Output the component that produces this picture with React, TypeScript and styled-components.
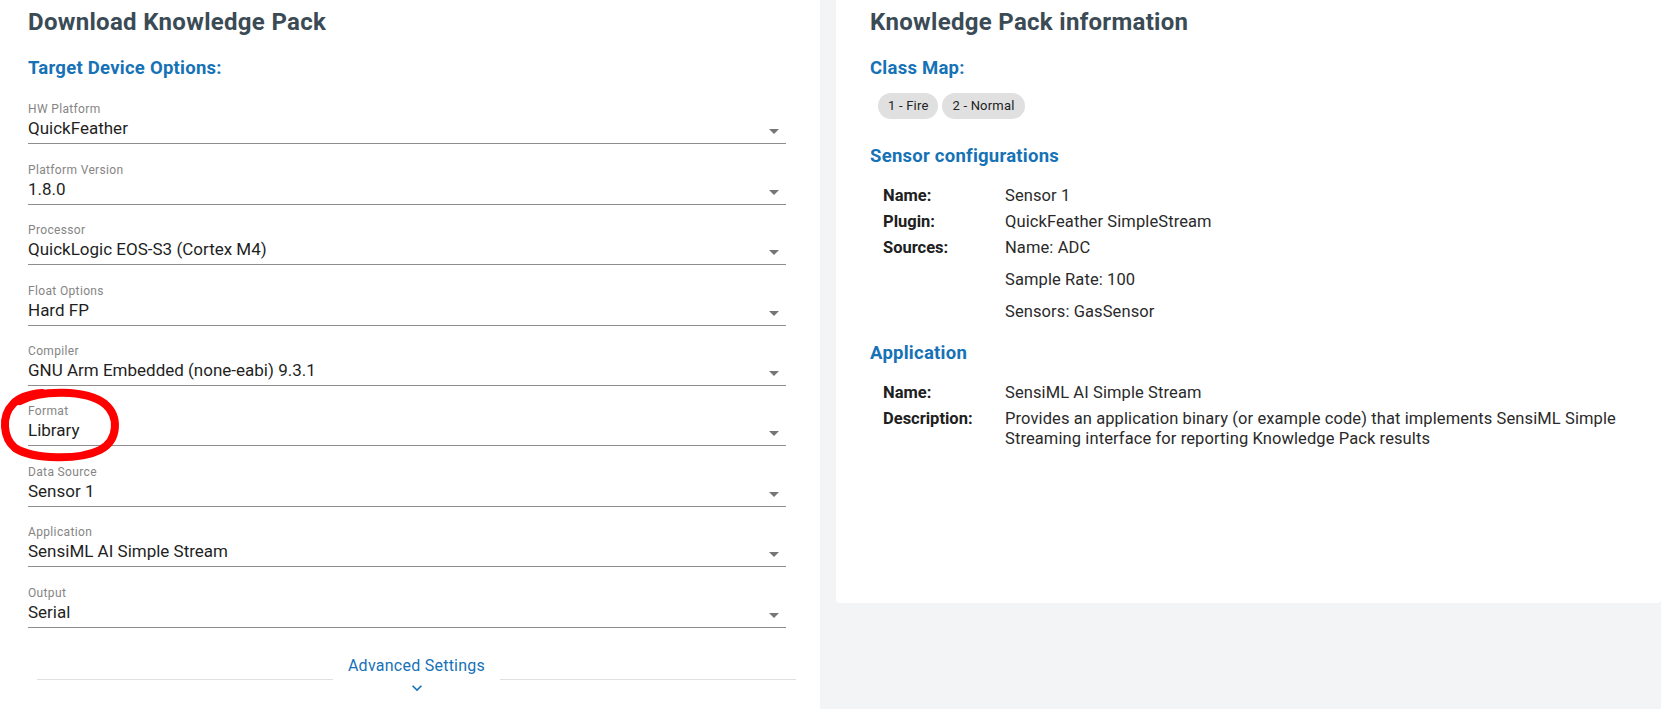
import React from "react";
import styled, { createGlobalStyle } from "styled-components";

const GlobalStyle = createGlobalStyle`
  html, body {
    margin: 0;
    padding: 0;
    background: #f3f4f6;
    font-family: Roboto, "Noto Sans", Arial, sans-serif;
  }
  * { box-sizing: border-box; }
`;

const Page = styled.div`
  display: grid;
  grid-template-columns: 820px 1fr;
  column-gap: 16px;
  align-items: start;
  min-height: 709px;
`;

const LeftPanel = styled.section`
  position: relative;
  background: #ffffff;
  padding: 6px 34px 40px 28px;
  min-height: 760px;
`;

const RightPanel = styled.section`
  background: #ffffff;
  padding: 6px 34px 0 34px;
  height: 603px;
  border-radius: 0 0 4px 4px;
`;

const Title = styled.h1`
  margin: 0;
  font-size: 24px;
  line-height: 32px;
  font-weight: 700;
  letter-spacing: 0.3px;
  color: #3b4b56;
`;

const SectionTitle = styled.h2<{ $top: number }>`
  margin: ${(p) => p.$top}px 0 0 0;
  font-size: 18.5px;
  line-height: 24px;
  font-weight: 700;
  letter-spacing: 0.25px;
  color: #1672b6;
`;

const FieldList = styled.div`
  display: flex;
  flex-direction: column;
  gap: 18.4px;
  margin-top: 22.4px;
`;

const Field = styled.div`
  display: flex;
  flex-direction: column;
`;

const FieldLabel = styled.label`
  font-size: 12px;
  line-height: 14px;
  letter-spacing: 0.35px;
  color: #858585;
`;

const SelectBox = styled.div`
  display: flex;
  align-items: center;
  justify-content: space-between;
  padding-bottom: 3px;
  border-bottom: 1px solid #8e8e8e;
`;

const SelectValue = styled.span`
  font-size: 17px;
  line-height: 24px;
  color: #1f1f1f;
`;

const DropIcon = styled.svg`
  flex: none;
  width: 24px;
  height: 24px;
  fill: #767676;
  margin: 3px 0 -3px;
`;

const Advanced = styled.div`
  display: grid;
  grid-template-columns: 1fr auto 1fr;
  column-gap: 15px;
  margin: 26px -10px 0 9px;
`;

const AdvLine = styled.div`
  height: 1px;
  background: #e0e0e0;
  margin-top: 25.5px;
`;

const AdvCenter = styled.div`
  display: flex;
  flex-direction: column;
  align-items: center;
`;

const AdvText = styled.button`
  border: none;
  background: none;
  padding: 0;
  font-family: inherit;
  font-size: 16px;
  line-height: 24px;
  letter-spacing: 0.25px;
  color: #1672b6;
  cursor: pointer;
`;

const Chevron = styled.svg`
  width: 20px;
  height: 20px;
  fill: #1672b6;
  margin-top: 0;
`;

const Annotation = styled.svg`
  position: absolute;
  left: 0;
  top: 387px;
  width: 124px;
  height: 76px;
  overflow: visible;
  pointer-events: none;
`;

const Chips = styled.div`
  display: flex;
  gap: 4px;
  margin: 13px 0 0 8px;
`;

const Chip = styled.span`
  height: 26px;
  padding: 0 10px;
  border-radius: 13px;
  background: #e0e0e0;
  font-size: 13px;
  line-height: 26px;
  letter-spacing: 0.2px;
  color: #222;
`;

const InfoTable = styled.div`
  display: grid;
  grid-template-columns: 122px 1fr;
  margin: 15px 0 0 13px;
`;

const InfoLabel = styled.div`
  padding: 3px 0;
  font-size: 16.5px;
  line-height: 20px;
  font-weight: 700;
  color: #202020;
`;

const InfoValue = styled.div`
  padding: 3px 0;
  font-size: 16.5px;
  line-height: 20px;
  letter-spacing: 0.1px;
  color: #2a2a2a;
`;

const SourceLine = styled.div`
  & + & {
    margin-top: 12px;
  }
`;

const fields: [string, string][] = [
  ["HW Platform", "QuickFeather"],
  ["Platform Version", "1.8.0"],
  ["Processor", "QuickLogic EOS-S3 (Cortex M4)"],
  ["Float Options", "Hard FP"],
  ["Compiler", "GNU Arm Embedded (none-eabi) 9.3.1"],
  ["Format", "Library"],
  ["Data Source", "Sensor 1"],
  ["Application", "SensiML AI Simple Stream"],
  ["Output", "Serial"],
];

export default function App() {
  return (
    <>
      <GlobalStyle />
      <Page>
        <LeftPanel>
          <Title>Download Knowledge Pack</Title>
          <SectionTitle $top={18}>Target Device Options:</SectionTitle>
          <FieldList>
            {fields.map(([label, value]) => (
              <Field key={label}>
                <FieldLabel>{label}</FieldLabel>
                <SelectBox>
                  <SelectValue>{value}</SelectValue>
                  <DropIcon viewBox="0 0 24 24">
                    <path d="M7 10l5 5 5-5z" />
                  </DropIcon>
                </SelectBox>
              </Field>
            ))}
          </FieldList>
          <Advanced>
            <AdvLine />
            <AdvCenter>
              <AdvText>Advanced Settings</AdvText>
              <Chevron viewBox="0 0 24 24">
                <path d="M16.59 8.59L12 13.17 7.41 8.59 6 10l6 6 6-6z" />
              </Chevron>
            </AdvCenter>
            <AdvLine />
          </Advanced>
          <Annotation viewBox="0 0 124 76">
            <path
              d="M20 14 C40 3, 86 2, 105 17 C119 29, 119 53, 100 63 C80 73, 34 73, 15 61 C3 51, 1 29, 13 17 C19 10, 30 7, 42 6"
              fill="none"
              stroke="#ff0000"
              strokeWidth="8"
              strokeLinecap="round"
              strokeLinejoin="round"
            />
          </Annotation>
        </LeftPanel>
        <RightPanel>
          <Title>Knowledge Pack information</Title>
          <SectionTitle $top={18}>Class Map:</SectionTitle>
          <Chips>
            <Chip>1 - Fire</Chip>
            <Chip>2 - Normal</Chip>
          </Chips>
          <SectionTitle $top={25}>Sensor configurations</SectionTitle>
          <InfoTable>
            <InfoLabel>Name:</InfoLabel>
            <InfoValue>Sensor 1</InfoValue>
            <InfoLabel>Plugin:</InfoLabel>
            <InfoValue>QuickFeather SimpleStream</InfoValue>
            <InfoLabel>Sources:</InfoLabel>
            <InfoValue>
              <SourceLine>Name: ADC</SourceLine>
              <SourceLine>Sample Rate: 100</SourceLine>
              <SourceLine>Sensors: GasSensor</SourceLine>
            </InfoValue>
          </InfoTable>
          <SectionTitle $top={16}>Application</SectionTitle>
          <InfoTable>
            <InfoLabel>Name:</InfoLabel>
            <InfoValue>SensiML AI Simple Stream</InfoValue>
            <InfoLabel>Description:</InfoLabel>
            <InfoValue>
              Provides an application binary (or example code) that implements SensiML Simple
              Streaming interface for reporting Knowledge Pack results
            </InfoValue>
          </InfoTable>
        </RightPanel>
      </Page>
    </>
  );
}
